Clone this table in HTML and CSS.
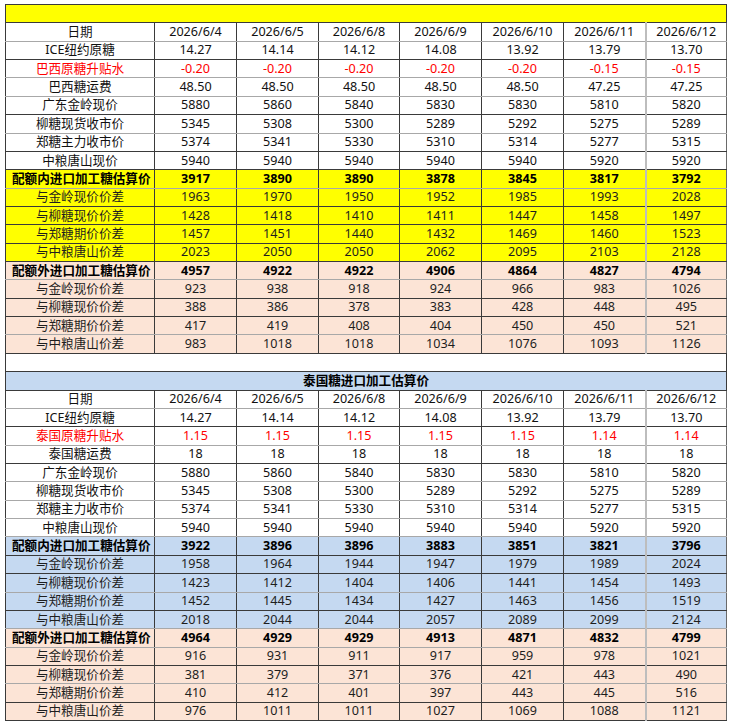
FILE: index.html
```html
<!DOCTYPE html>
<html lang="zh-CN">
<head>
<meta charset="utf-8">
<title>进口加工糖估算价</title>
<link rel="stylesheet" href="styles.css">
</head>
<body>
<table class="sheet">
<colgroup>
<col class="c-label"><col class="c-d"><col class="c-d"><col class="c-d2"><col class="c-d"><col class="c-d"><col class="c-d"><col class="c-d2">
</colgroup>
<tbody>
<tr class="title yellow"><td colspan="8"></td></tr>
<tr class="lt"><td>日期</td><td>2026/6/4</td><td>2026/6/5</td><td>2026/6/8</td><td>2026/6/9</td><td>2026/6/10</td><td>2026/6/11</td><td class="last">2026/6/12</td></tr>
<tr><td>ICE纽约原糖</td><td>14.27</td><td>14.14</td><td>14.12</td><td>14.08</td><td>13.92</td><td>13.79</td><td class="last">13.70</td></tr>
<tr class="red lt"><td>巴西原糖升贴水</td><td>-0.20</td><td>-0.20</td><td>-0.20</td><td>-0.20</td><td>-0.20</td><td>-0.15</td><td class="last">-0.15</td></tr>
<tr class="lt"><td>巴西糖运费</td><td>48.50</td><td>48.50</td><td>48.50</td><td>48.50</td><td>48.50</td><td>47.25</td><td class="last">47.25</td></tr>
<tr><td>广东金岭现价</td><td>5880</td><td>5860</td><td>5840</td><td>5830</td><td>5830</td><td>5810</td><td class="last">5820</td></tr>
<tr class="lt"><td>柳糖现货收市价</td><td>5345</td><td>5308</td><td>5300</td><td>5289</td><td>5292</td><td>5275</td><td class="last">5289</td></tr>
<tr><td>郑糖主力收市价</td><td>5374</td><td>5341</td><td>5330</td><td>5310</td><td>5314</td><td>5277</td><td class="last">5315</td></tr>
<tr><td>中粮唐山现价</td><td>5940</td><td>5940</td><td>5940</td><td>5940</td><td>5940</td><td>5920</td><td class="last">5920</td></tr>
<tr class="yellow bold lt"><td class="left">配额内进口加工糖估算价</td><td>3917</td><td>3890</td><td>3890</td><td>3878</td><td>3845</td><td>3817</td><td class="last">3792</td></tr>
<tr class="yellow sub"><td>与金岭现价价差</td><td>1963</td><td>1970</td><td>1950</td><td>1952</td><td>1985</td><td>1993</td><td class="last">2028</td></tr>
<tr class="yellow sub"><td>与柳糖现价价差</td><td>1428</td><td>1418</td><td>1410</td><td>1411</td><td>1447</td><td>1458</td><td class="last">1497</td></tr>
<tr class="yellow sub"><td>与郑糖期价价差</td><td>1457</td><td>1451</td><td>1440</td><td>1432</td><td>1469</td><td>1460</td><td class="last">1523</td></tr>
<tr class="yellow sub"><td>与中粮唐山价差</td><td>2023</td><td>2050</td><td>2050</td><td>2062</td><td>2095</td><td>2103</td><td class="last">2128</td></tr>
<tr class="peach bold lt"><td class="left">配额外进口加工糖估算价</td><td>4957</td><td>4922</td><td>4922</td><td>4906</td><td>4864</td><td>4827</td><td class="last">4794</td></tr>
<tr class="peach sub"><td>与金岭现价价差</td><td>923</td><td>938</td><td>918</td><td>924</td><td>966</td><td>983</td><td class="last">1026</td></tr>
<tr class="peach sub"><td>与柳糖现价价差</td><td>388</td><td>386</td><td>378</td><td>383</td><td>428</td><td>448</td><td class="last">495</td></tr>
<tr class="peach sub lt"><td>与郑糖期价价差</td><td>417</td><td>419</td><td>408</td><td>404</td><td>450</td><td>450</td><td class="last">521</td></tr>
<tr class="peach sub"><td>与中粮唐山价差</td><td>983</td><td>1018</td><td>1018</td><td>1034</td><td>1076</td><td>1093</td><td class="last">1126</td></tr>
<tr class="blank"><td colspan="8"></td></tr>
<tr class="title blue"><td colspan="8">泰国糖进口加工估算价</td></tr>
<tr class="lt"><td>日期</td><td>2026/6/4</td><td>2026/6/5</td><td>2026/6/8</td><td>2026/6/9</td><td>2026/6/10</td><td>2026/6/11</td><td class="last">2026/6/12</td></tr>
<tr><td>ICE纽约原糖</td><td>14.27</td><td>14.14</td><td>14.12</td><td>14.08</td><td>13.92</td><td>13.79</td><td class="last">13.70</td></tr>
<tr class="red lt"><td>泰国原糖升贴水</td><td>1.15</td><td>1.15</td><td>1.15</td><td>1.15</td><td>1.15</td><td>1.14</td><td class="last">1.14</td></tr>
<tr><td>泰国糖运费</td><td>18</td><td>18</td><td>18</td><td>18</td><td>18</td><td>18</td><td class="last">18</td></tr>
<tr class="lt"><td>广东金岭现价</td><td>5880</td><td>5860</td><td>5840</td><td>5830</td><td>5830</td><td>5810</td><td class="last">5820</td></tr>
<tr class="lt"><td>柳糖现货收市价</td><td>5345</td><td>5308</td><td>5300</td><td>5289</td><td>5292</td><td>5275</td><td class="last">5289</td></tr>
<tr class="lt"><td>郑糖主力收市价</td><td>5374</td><td>5341</td><td>5330</td><td>5310</td><td>5314</td><td>5277</td><td class="last">5315</td></tr>
<tr class="lt"><td>中粮唐山现价</td><td>5940</td><td>5940</td><td>5940</td><td>5940</td><td>5940</td><td>5920</td><td class="last">5920</td></tr>
<tr class="blue bold"><td class="left">配额内进口加工糖估算价</td><td>3922</td><td>3896</td><td>3896</td><td>3883</td><td>3851</td><td>3821</td><td class="last">3796</td></tr>
<tr class="blue sub"><td>与金岭现价价差</td><td>1958</td><td>1964</td><td>1944</td><td>1947</td><td>1979</td><td>1989</td><td class="last">2024</td></tr>
<tr class="blue sub lt"><td>与柳糖现价价差</td><td>1423</td><td>1412</td><td>1404</td><td>1406</td><td>1441</td><td>1454</td><td class="last">1493</td></tr>
<tr class="blue sub"><td>与郑糖期价价差</td><td>1452</td><td>1445</td><td>1434</td><td>1427</td><td>1463</td><td>1456</td><td class="last">1519</td></tr>
<tr class="blue sub lt"><td>与中粮唐山价差</td><td>2018</td><td>2044</td><td>2044</td><td>2057</td><td>2089</td><td>2099</td><td class="last">2124</td></tr>
<tr class="peach bold lt"><td class="left">配额外进口加工糖估算价</td><td>4964</td><td>4929</td><td>4929</td><td>4913</td><td>4871</td><td>4832</td><td class="last">4799</td></tr>
<tr class="peach sub"><td>与金岭现价价差</td><td>916</td><td>931</td><td>911</td><td>917</td><td>959</td><td>978</td><td class="last">1021</td></tr>
<tr class="peach sub lt"><td>与柳糖现价价差</td><td>381</td><td>379</td><td>371</td><td>376</td><td>421</td><td>443</td><td class="last">490</td></tr>
<tr class="peach sub"><td>与郑糖期价价差</td><td>410</td><td>412</td><td>401</td><td>397</td><td>443</td><td>445</td><td class="last">516</td></tr>
<tr class="peach sub"><td>与中粮唐山价差</td><td>976</td><td>1011</td><td>1011</td><td>1027</td><td>1069</td><td>1088</td><td class="last">1121</td></tr>
</tbody>
</table>
</body>
</html>
```
FILE: styles.css
```css
html, body {
  margin: 0;
  padding: 0;
  background: #ffffff;
}
body {
  padding: 4px 0 0 5px;
  font-family: "Noto Sans", "Noto Sans CJK SC", sans-serif;
  font-size: 12.6px;
  color: #111;
}
.sheet {
  border-collapse: collapse;
  table-layout: fixed;
  width: 721px;
}
.c-label { width: 149px; }
.c-d { width: 82px; }
.c-d2 { width: 81px; }
.sheet tr {
  height: 18.37px;
}
.sheet td {
  padding: 0;
  height: 17px;
  line-height: 16px;
  text-align: center;
  white-space: nowrap;
  overflow: hidden;
  border: 1px solid #3a3a3a;
}
.sheet tr.lt td {
  border-bottom-color: #a8a8a8;
}
.sheet td.last {
  border-left: 2px solid #bdbdbd;
  border-right-color: #6a6a6a;
}
.yellow td { background: #ffff00; }
.peach td { background: #fce4d6; }
.blue td { background: #c5d9f1; }
.red td { color: #ff0000; }
.bold td { font-weight: 700; color: #000; }
.sub td { color: #1e1e1e; }
.sheet td.left {
  text-align: left;
  padding-left: 6px;
}
.title td {
  font-weight: 700;
  color: #000;
}
.blank td {
  background: #fff;
}
```
